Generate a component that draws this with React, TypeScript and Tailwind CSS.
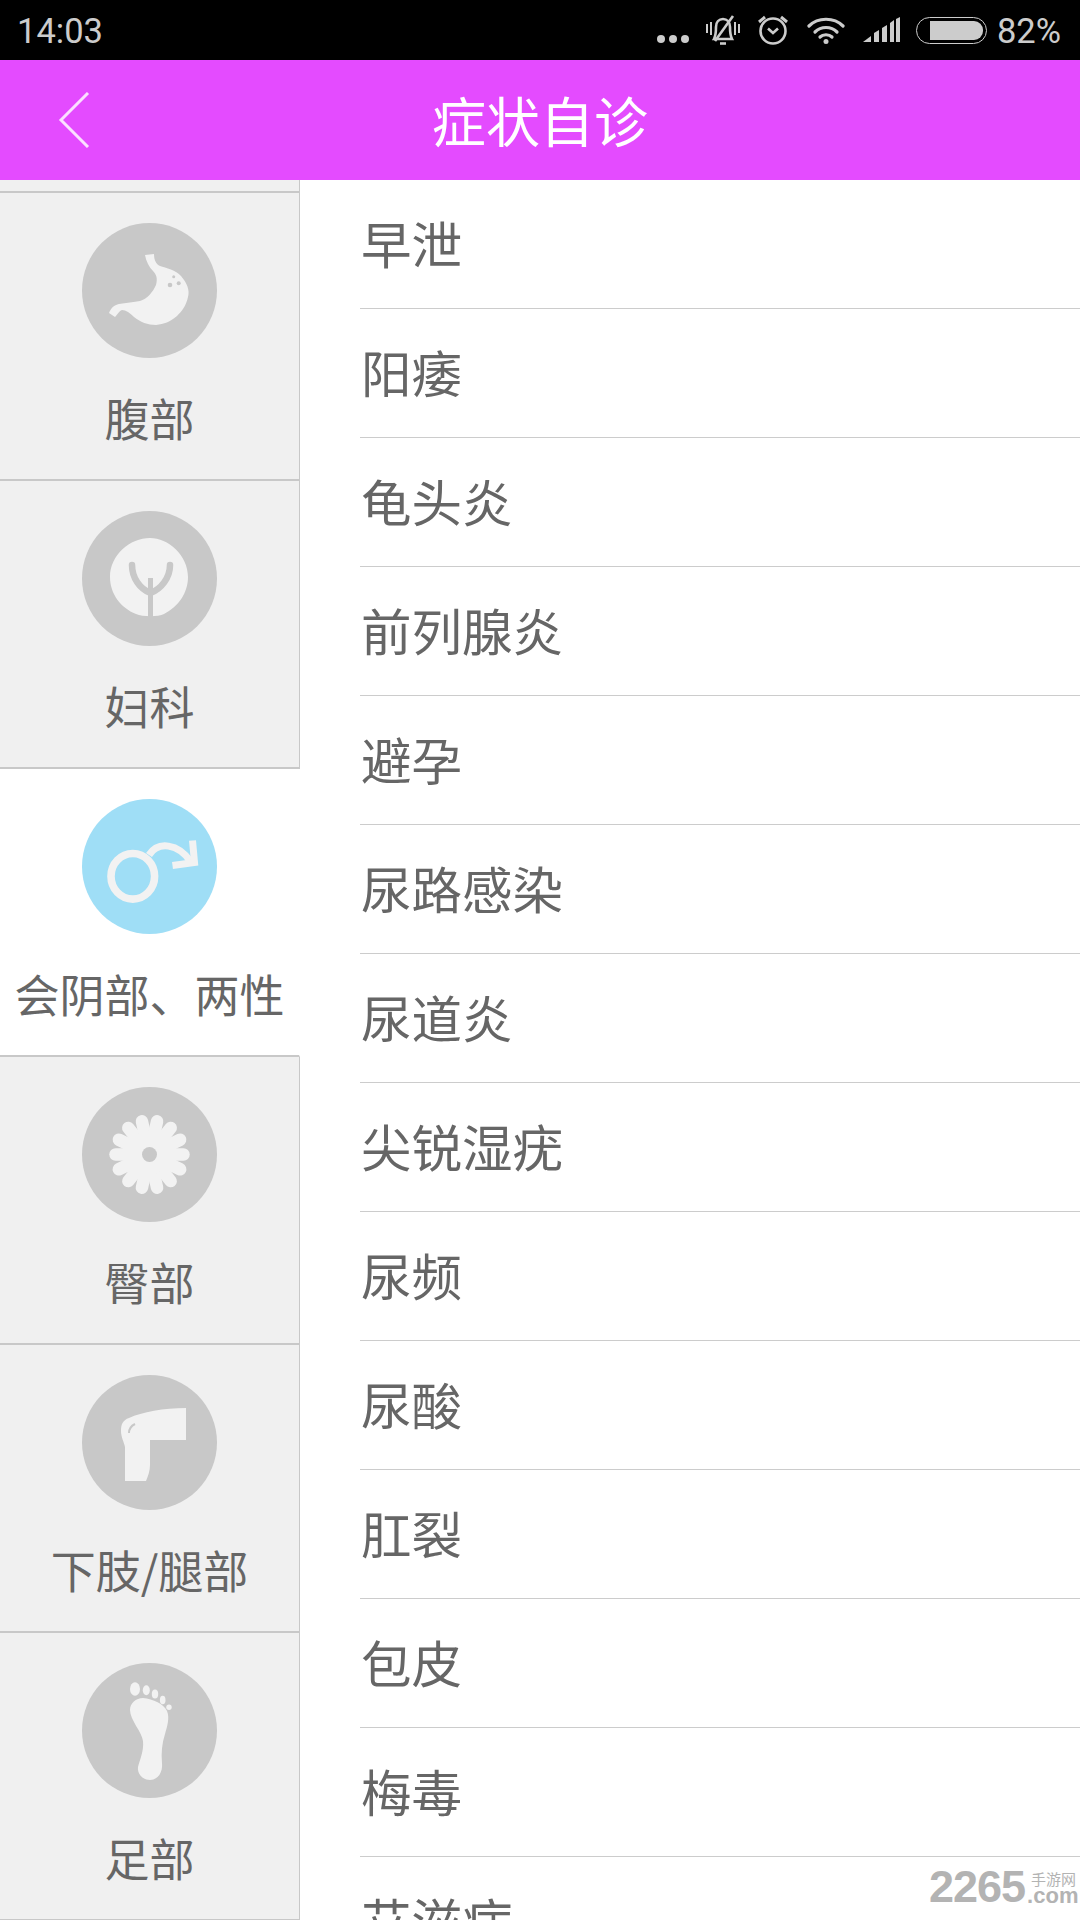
import type { ReactNode } from "react";

const FONT = "[font-family:'Noto_Sans_CJK_SC','Noto_Sans',sans-serif]";

const symptoms = [
  "早泄",
  "阳痿",
  "龟头炎",
  "前列腺炎",
  "避孕",
  "尿路感染",
  "尿道炎",
  "尖锐湿疣",
  "尿频",
  "尿酸",
  "肛裂",
  "包皮",
  "梅毒",
  "艾滋病",
];

const petals = Array.from({ length: 14 }, (_, i) => (i * Math.PI * 2) / 14);

function Stomach() {
  return (
    <>
      <path
        d="M63 32 L72 31 C72 37 74 41 78 43 C84 45 94 47 99 53 C105 60 108 67 106 74 C104 83 100 88 95 93 C88 99 82 101 74 102 C66 102 58 99 52 94 C48 90 44 87 40 87 C37 88 35 92 33 94 L27 90 C29 85 32 82 37 81 C44 80 52 79 58 78 C65 76 71 69 74 62 C76 55 74 51 71 48 C67 44 64 38 63 32 Z"
        fill="#f2f2f2"
      />
      <circle cx="91.7" cy="53.7" r="1.5" fill="#c8c8c8" />
      <circle cx="88" cy="62" r="2.3" fill="#c8c8c8" />
      <circle cx="96.7" cy="60.3" r="2" fill="#c8c8c8" />
    </>
  );
}

function Uterus() {
  return (
    <>
      <path
        d="M68 27 C86 27 106 44 106 66 C106 82 96 96 82 103 C76 106 61 106 54 103 C39 97 28 83 28 66 C28 44 48 27 68 27 Z"
        fill="#f2f2f2"
      />
      <path
        d="M50 54 C50 67 58 78 68.5 82 C79 78 88 67 88 54"
        fill="none"
        stroke="#c8c8c8"
        strokeWidth="6.5"
        strokeLinecap="round"
      />
      <path d="M68.5 67 V107" stroke="#c8c8c8" strokeWidth="5" />
    </>
  );
}

function MaleSign() {
  return (
    <>
      <ellipse cx="50.8" cy="77.3" rx="21.8" ry="22.8" fill="none" stroke="#f2f2f2" strokeWidth="7.6" />
      <path d="M67 56 C76 42 96 44 109 63" fill="none" stroke="#f2f2f2" strokeWidth="7" />
      <path d="M110.5 41.5 L112.5 63.5 L90.5 66.5" fill="none" stroke="#f2f2f2" strokeWidth="7" />
    </>
  );
}

function Flower() {
  return (
    <>
      {petals.map((a) => (
        <line
          key={a}
          x1={67.5 + Math.cos(a) * 14}
          y1={67.5 + Math.sin(a) * 14}
          x2={67.5 + Math.cos(a) * 34}
          y2={67.5 + Math.sin(a) * 34}
          stroke="#f2f2f2"
          strokeWidth="12.5"
          strokeLinecap="round"
        />
      ))}
      <circle cx="67.5" cy="67.5" r="20" fill="#f2f2f2" />
      <circle cx="67.5" cy="67.5" r="7.5" fill="#c8c8c8" />
    </>
  );
}

function Leg() {
  return (
    <>
      <path
        d="M104 33 V65 H68 V90 C68 96 66 101 64 106 H43 V72 C42 67 39 62 39 56 C39 49 41 45 47 43 C60 37 82 33 104 33 Z"
        fill="#f2f2f2"
      />
      <path d="M47 58 C47 54 49 51 53 49" fill="none" stroke="#c8c8c8" strokeWidth="2" />
    </>
  );
}

function Foot() {
  return (
    <>
      <path
        d="M48 47 C48 40 54 35 61 35 C71 36 82 41 85 48 C88 55 85 64 83 71 C80 80 79 90 80 100 C81 109 76 117 68 117 C60 117 55 110 56 104 C58 96 62 88 61 78 C60 69 48 57 48 47 Z"
        fill="#f2f2f2"
      />
      <ellipse cx="53" cy="26" rx="5" ry="6.7" fill="#f2f2f2" />
      <ellipse cx="64.3" cy="27.3" rx="3.5" ry="5" fill="#f2f2f2" />
      <ellipse cx="73" cy="31" rx="3.2" ry="4.5" fill="#f2f2f2" />
      <ellipse cx="80.7" cy="37" rx="2.8" ry="4.3" fill="#f2f2f2" />
      <circle cx="87" cy="44.3" r="2.7" fill="#f2f2f2" />
    </>
  );
}

const parts: { label: string; icon: ReactNode; active?: boolean }[] = [
  { label: "腹部", icon: <Stomach /> },
  { label: "妇科", icon: <Uterus /> },
  { label: "会阴部、两性", icon: <MaleSign />, active: true },
  { label: "臀部", icon: <Flower /> },
  { label: "下肢/腿部", icon: <Leg /> },
  { label: "足部", icon: <Foot /> },
];

function StatusBar() {
  return (
    <div className="flex h-[60px] shrink-0 items-center justify-between bg-black pl-[17px] pr-[19px] text-[#cccccc] font-['Roboto',sans-serif] text-[34.5px]">
      <span className="pt-[4px]">14:03</span>
      <div className="flex items-center">
        <svg width="34" height="10" viewBox="0 0 34 10" fill="#cccccc" className="mt-[18px]">
          <circle cx="5" cy="5" r="4" />
          <circle cx="17" cy="5" r="4" />
          <circle cx="29" cy="5" r="4" />
        </svg>
        <svg width="34" height="30" viewBox="0 0 34 30" fill="none" stroke="#cccccc" strokeWidth="2.6" className="ml-[16px]">
          <path d="M8 24 C10 20 10 16 10 12 C10 7 13 4 17 4 C21 4 24 7 24 12 C24 16 24 20 26 24 Z" />
          <path d="M14 28.5 H20" />
          <path d="M27 1 L9 26" />
          <path d="M1 9 V18 M33 9 V18 M5 7 V20 M29 7 V20" strokeWidth="2" />
        </svg>
        <svg width="32" height="30" viewBox="0 0 32 30" fill="none" stroke="#cccccc" strokeWidth="2.6" className="ml-[17px]">
          <circle cx="16" cy="16" r="12.5" />
          <path d="M11 13.5 L16 18 L21 13.5" />
          <path d="M2 7 L8 2 M30 7 L24 2" strokeWidth="3" />
        </svg>
        <svg width="38" height="27" viewBox="0 0 38 27" fill="none" stroke="#cccccc" strokeWidth="3.2" strokeLinecap="round" className="ml-[18px]">
          <path d="M2 9 C11 0 27 0 36 9" />
          <path d="M8 15 C14 9 24 9 30 15" />
          <path d="M13 20 C16 17 22 17 25 20" />
          <circle cx="19" cy="24.5" r="2.5" fill="#cccccc" stroke="none" />
        </svg>
        <svg width="37" height="26" viewBox="0 0 37 26" fill="#cccccc" className="ml-[18px]">
          <path d="M0 25 L8 19 V25 Z" />
          <path d="M11 25 V16 L16 13 V25 Z" />
          <path d="M19 25 V11 L24 8 V25 Z" />
          <path d="M27 25 V6 L31 3 V25 Z" />
          <path d="M33 25 V2 L37 0 V25 Z" />
        </svg>
        <div className="ml-[16px] flex h-[27px] w-[71px] items-center rounded-[14px] border-[1.5px] border-[#cccccc] pl-[13px] pr-[3px]">
          <div className="h-[19px] w-full rounded-r-[9px] bg-[#cccccc]" />
        </div>
        <span className="ml-[10px] pt-[4px]">82%</span>
      </div>
    </div>
  );
}

function NavBar() {
  return (
    <div className={`relative flex h-[120px] shrink-0 items-center justify-center bg-[#e44bff] pb-[2px] text-[54px] text-white ${FONT}`}>
      <svg width="34" height="56" viewBox="0 0 34 56" fill="none" stroke="#fbe0ff" strokeWidth="3" className="absolute left-[58px] top-[32px]">
        <path d="M30 1 L3 28 L30 55" />
      </svg>
      症状自诊
    </div>
  );
}

function Sidebar() {
  return (
    <div className={`flex w-[300px] shrink-0 flex-col bg-[#f0f0f0] ${FONT}`}>
      <div className="h-[13px] shrink-0 border-b-2 border-r border-[#c8c8c8]" />
      {parts.map((part) => (
        <div
          key={part.label}
          className={`flex h-[288px] shrink-0 flex-col items-center border-b-2 border-r border-[#c8c8c8] pt-[30px] ${
            part.active ? "border-r-white bg-white" : ""
          }`}
        >
          <svg width="135" height="135" viewBox="0 0 135 135">
            <circle cx="67.5" cy="67.5" r="67.5" fill={part.active ? "#9fdef6" : "#c8c8c8"} />
            {part.icon}
          </svg>
          <span className="mt-[30px] whitespace-nowrap text-[45px] leading-[60px] text-[#666666]">
            {part.label}
          </span>
        </div>
      ))}
    </div>
  );
}

function SymptomList() {
  return (
    <div className={`min-w-0 flex-1 pl-[60px] ${FONT}`}>
      {symptoms.map((name) => (
        <div
          key={name}
          className="flex h-[129px] items-center border-b border-[#cccccc] pb-[3px] pl-[1px] text-[50.5px] leading-none text-[#666666]"
        >
          {name}
        </div>
      ))}
    </div>
  );
}

export default function App() {
  return (
    <div className="relative flex h-[1920px] w-[1080px] flex-col overflow-hidden bg-white">
      <StatusBar />
      <NavBar />
      <div className="flex min-h-0 flex-1 overflow-hidden">
        <Sidebar />
        <SymptomList />
      </div>

      <div className="absolute left-[929px] top-[1869px] flex items-end text-[#b3b3b3]">
        <span className="font-['Liberation_Sans',sans-serif] text-[45px] font-bold leading-[36px] tracking-[-1px]">
          2265
        </span>
        <div className="ml-[2px] flex flex-col items-start">
          <span className={`pl-[4px] text-[15px] leading-[15px] ${FONT}`}>手游网</span>
          <span className="font-['Liberation_Sans',sans-serif] text-[22px] font-bold leading-[19px]">
            .com
          </span>
        </div>
      </div>
    </div>
  );
}
